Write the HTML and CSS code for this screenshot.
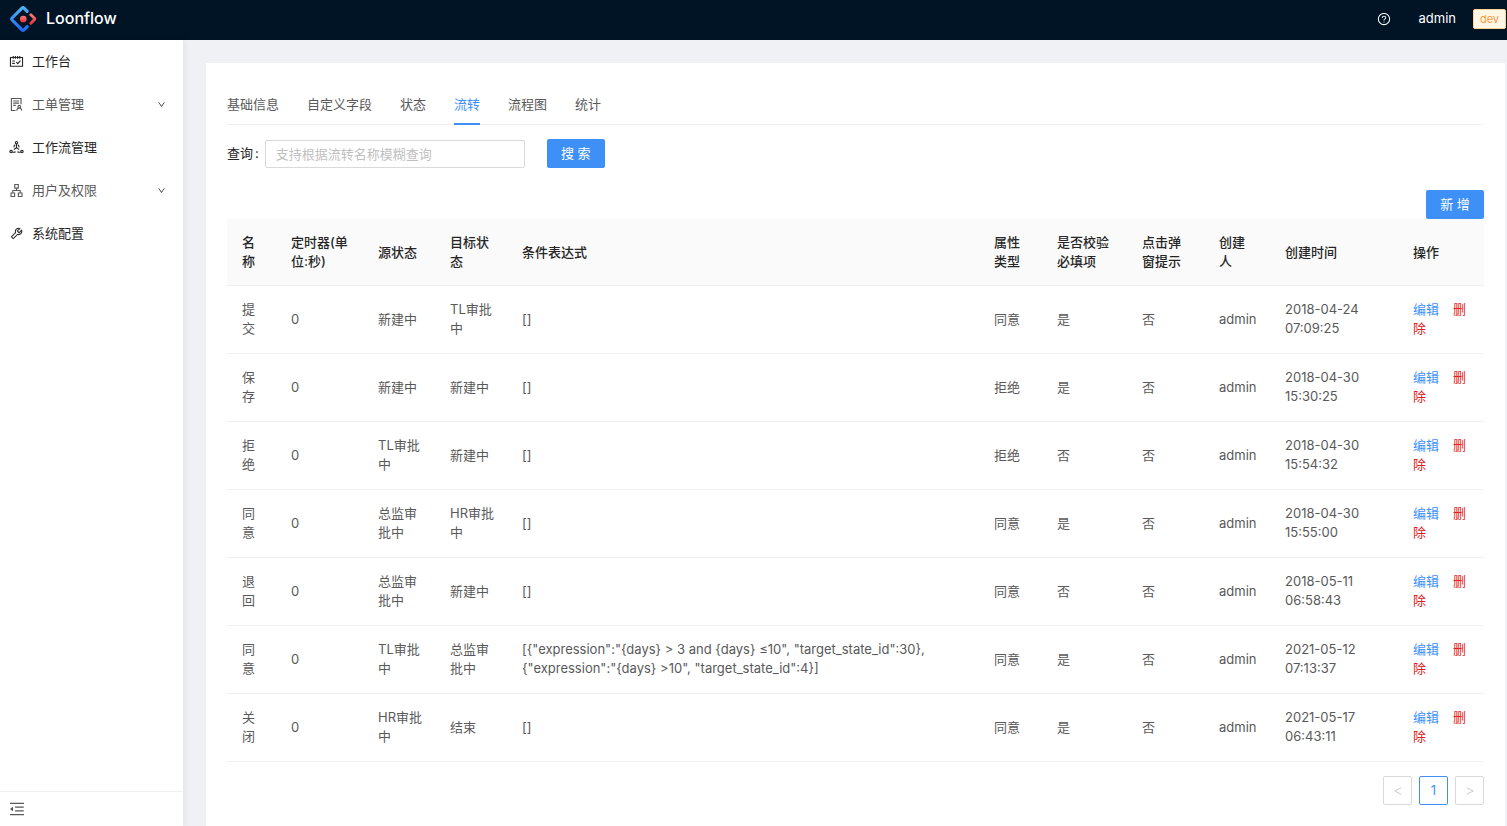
FILE: index.html
```
<!DOCTYPE html>
<html lang="zh-CN">
<head>
<meta charset="utf-8">
<meta name="viewport" content="width=device-width, initial-scale=1">
<title>Loonflow</title>
<link rel="stylesheet" href="styles.css">
</head>
<body>
<div class="app">
  <header class="topbar">
    <a class="brand" href="#">
      <svg class="logo" viewBox="0 0 200 200" aria-hidden="true">
        <defs>
          <linearGradient id="blue" x1="0" y1="0" x2="0" y2="1"><stop offset="0" stop-color="#4db5f5"/><stop offset="1" stop-color="#1f6df5"/></linearGradient>
          <linearGradient id="red" x1="0" y1="0" x2="0" y2="1"><stop offset="0" stop-color="#fa7a70"/><stop offset="1" stop-color="#ef3340"/></linearGradient>
        </defs>
        <path d="M130 45 L107 22 Q100 15 93 22 L22 93 Q15 100 22 107 L93 178 Q100 185 107 178 L130 155" fill="none" stroke="url(#blue)" stroke-width="22" stroke-linecap="round" stroke-linejoin="round"/>
        <path d="M156 70 L181 95 Q186 100 181 105 L156 130" fill="none" stroke="url(#red)" stroke-width="21" stroke-linecap="round" stroke-linejoin="round"/>
        <circle cx="102" cy="100" r="24" fill="url(#red)"/>
      </svg>
      <span>Loonflow</span>
    </a>
    <div class="tools">
      <button class="help" type="button" aria-label="帮助"><svg class="icon" viewBox="0 0 1024 1024"><path d="M512 64C264.600 64 64 264.600 64 512s200.600 448 448 448 448-200.600 448-448S759.400 64 512 64zm0 820c-205.400 0-372-166.600-372-372s166.600-372 372-372 372 166.600 372 372-166.600 372-372 372z"/><path d="M623.600 316.700C593.600 290.400 554 276 512 276s-81.600 14.500-111.600 40.700C369.200 344 352 380.700 352 420v7.600c0 4.400 3.600 8 8 8h48c4.400 0 8-3.600 8-8V420c0-44.100 43.100-80 96-80s96 35.900 96 80c0 31.100-22 59.600-56.100 72.700-21.200 8.100-39.200 22.300-52.100 40.900-13.100 19-19.900 41.800-19.900 64.900V620c0 4.400 3.600 8 8 8h48c4.400 0 8-3.600 8-8v-22.700a48.300 48.300 0 0130.900-44.800c59-22.700 97.100-74.700 97.100-132.500.1-39.300-17.100-76-48.300-103.300zM472 732a40 40 0 1080 0 40 40 0 10-80 0z"/></svg></button>
      <span class="user">admin</span>
      <span class="env">dev</span>
    </div>
  </header>
  <div class="body">
    <aside class="sidebar">
      <nav class="menu">
        <a class="item" href="#"><svg class="icon line" viewBox="0 0 1024 1024" aria-hidden="true"><path d="M100 240H924V840H100ZM290 140V330M438 140V330M586 140V330M734 140V330M220 480H400M220 640H400M500 550L600 655L780 450"/></svg><span>工作台</span></a>
        <a class="item sub" href="#"><svg class="icon line" viewBox="0 0 1024 1024" aria-hidden="true"><path d="M450 924H164V100H820V500M290 270H690M290 420H690M290 570H460"/><circle cx="700" cy="660" r="90"/><path d="M530 930C545 805 610 750 700 750S855 805 870 930"/></svg><span>工单管理</span><svg class="arrow" viewBox="0 0 1024 1024" aria-hidden="true"><path d="M884 256h-75c-5.100 0-9.900 2.500-12.900 6.600L512 654.200 227.900 262.600c-3-4.100-7.800-6.600-12.900-6.600h-75c-6.500 0-10.300 7.400-6.500 12.700l352.600 486.100c12.800 17.600 39 17.600 51.700 0l352.600-486.100c3.900-5.300.1-12.700-6.400-12.700z"/></svg></a>
        <a class="item" href="#"><svg class="icon line" viewBox="0 0 1024 1024" aria-hidden="true"><circle cx="512" cy="180" r="80"/><circle cx="140" cy="790" r="80"/><circle cx="884" cy="790" r="80"/><path d="M512 260V520L330 650M512 520L694 650M420 320C360 370 340 430 335 500M604 320C664 370 684 430 689 500M220 820C300 850 380 850 450 800M804 820C724 850 644 850 574 800"/></svg><span>工作流管理</span></a>
        <a class="item sub" href="#"><svg class="icon" viewBox="0 0 1024 1024" aria-hidden="true"><path d="M908 640H804V488c0-4.400-3.600-8-8-8H548v-96h108c8.800 0 16-7.200 16-16V80c0-8.800-7.200-16-16-16H368c-8.800 0-16 7.200-16 16v288c0 8.800 7.200 16 16 16h108v96H228c-4.400 0-8 3.600-8 8v152H116c-8.800 0-16 7.200-16 16v288c0 8.800 7.200 16 16 16h288c8.800 0 16-7.200 16-16V656c0-8.800-7.200-16-16-16H292v-88h440v88H620c-8.800 0-16 7.200-16 16v288c0 8.800 7.200 16 16 16h288c8.800 0 16-7.200 16-16V656c0-8.800-7.200-16-16-16zm-564 76v168H176V716h168zm84-408V140h168v168H428zm420 576H680V716h168v168z"/></svg><span>用户及权限</span><svg class="arrow" viewBox="0 0 1024 1024" aria-hidden="true"><path d="M884 256h-75c-5.100 0-9.900 2.500-12.900 6.600L512 654.200 227.900 262.600c-3-4.100-7.800-6.600-12.900-6.600h-75c-6.500 0-10.300 7.400-6.500 12.700l352.600 486.100c12.800 17.600 39 17.600 51.700 0l352.600-486.100c3.900-5.300.1-12.700-6.400-12.700z"/></svg></a>
        <a class="item" href="#"><svg class="icon" viewBox="0 0 1024 1024" aria-hidden="true"><path d="M876.600 239.500c-.5-.9-1.200-1.800-2-2.500-5-5-13.100-5-18.100 0L684.200 409.300l-67.900-67.900L788.700 169c.8-.8 1.400-1.600 2-2.500 3.600-6.100 1.600-13.900-4.500-17.500-98.200-58-226.800-44.700-311.300 39.700-67 67-89.200 162-66.500 247.400l-293 293c-3 3-2.800 7.900.3 11l169.700 169.700c3.100 3.100 8.100 3.300 11 .3l292.900-292.900c85.500 22.800 180.500.7 247.600-66.400 84.400-84.500 97.700-213.100 39.700-311.300zM786 499.800c-58.100 58.100-145.300 69.300-214.600 33.600l-8.800 8.800-.1-.1-274 274.100-79.200-79.200 230.100-230.100s0 .1.1.1l52.800-52.800c-35.700-69.300-24.500-156.500 33.600-214.600a184.200 184.200 0 01144-53.500L537 318.900a32.050 32.050 0 000 45.300l124.500 124.500a32.050 32.050 0 0045.300 0l132.800-132.800c3.700 51.800-14.400 104.800-53.600 143.900z"/></svg><span>系统配置</span></a>
      </nav>
      <div class="fold">
        <button type="button" aria-label="收起菜单"><svg class="icon" viewBox="0 0 1024 1024"><path d="M408 442h480c4.400 0 8-3.600 8-8v-56c0-4.400-3.600-8-8-8H408c-4.400 0-8 3.600-8 8v56c0 4.400 3.600 8 8 8zm-8 204c0 4.400 3.600 8 8 8h480c4.400 0 8-3.600 8-8v-56c0-4.400-3.600-8-8-8H408c-4.400 0-8 3.600-8 8v56zm504-486H120c-4.400 0-8 3.600-8 8v56c0 4.400 3.600 8 8 8h784c4.400 0 8-3.600 8-8v-56c0-4.400-3.600-8-8-8zm0 632H120c-4.400 0-8 3.600-8 8v56c0 4.400 3.600 8 8 8h784c4.400 0 8-3.600 8-8v-56c0-4.400-3.600-8-8-8zM115.400 518.900L271.700 642c5.800 4.600 14.400.5 14.400-6.900V388.900c0-7.400-8.500-11.500-14.400-6.900L115.400 505.100a8.740 8.740 0 000 13.800z"/></svg></button>
      </div>
    </aside>
    <main class="main">
      <section class="panel">
        <div class="tabs" role="tablist">
          <button class="tab" type="button" role="tab">基础信息</button>
          <button class="tab" type="button" role="tab">自定义字段</button>
          <button class="tab" type="button" role="tab">状态</button>
          <button class="tab active" type="button" role="tab" aria-selected="true">流转</button>
          <button class="tab" type="button" role="tab">流程图</button>
          <button class="tab" type="button" role="tab">统计</button>
        </div>
        <form class="search">
          <label for="query">查询<span class="colon">:</span></label>
          <input id="query" type="text" placeholder="支持根据流转名称模糊查询">
          <button class="primary" type="button">搜 索</button>
        </form>
        <div class="actions"><button class="primary" type="button">新 增</button></div>
        <table class="grid">
          <colgroup><col class="c-name"><col class="c-timer"><col class="c-state"><col class="c-state"><col><col class="c-attr"><col class="c-check"><col class="c-popup"><col class="c-user"><col class="c-time"><col class="c-ops"></colgroup>
          <thead><tr><th>名称</th><th>定时器(单位:秒)</th><th>源状态</th><th>目标状态</th><th>条件表达式</th><th>属性类型</th><th>是否校验必填项</th><th>点击弹窗提示</th><th>创建人</th><th>创建时间</th><th>操作</th></tr></thead>
          <tbody>
            <tr><td>提交</td><td>0</td><td>新建中</td><td>TL审批中</td><td>[]</td><td>同意</td><td>是</td><td>否</td><td>admin</td><td>2018-04-24 07:09:25</td><td><a class="edit" href="#">编辑</a><a class="del" href="#">删除</a></td></tr>
            <tr><td>保存</td><td>0</td><td>新建中</td><td>新建中</td><td>[]</td><td>拒绝</td><td>是</td><td>否</td><td>admin</td><td>2018-04-30 15:30:25</td><td><a class="edit" href="#">编辑</a><a class="del" href="#">删除</a></td></tr>
            <tr><td>拒绝</td><td>0</td><td>TL审批中</td><td>新建中</td><td>[]</td><td>拒绝</td><td>否</td><td>否</td><td>admin</td><td>2018-04-30 15:54:32</td><td><a class="edit" href="#">编辑</a><a class="del" href="#">删除</a></td></tr>
            <tr><td>同意</td><td>0</td><td>总监审批中</td><td>HR审批中</td><td>[]</td><td>同意</td><td>是</td><td>否</td><td>admin</td><td>2018-04-30 15:55:00</td><td><a class="edit" href="#">编辑</a><a class="del" href="#">删除</a></td></tr>
            <tr><td>退回</td><td>0</td><td>总监审批中</td><td>新建中</td><td>[]</td><td>同意</td><td>否</td><td>否</td><td>admin</td><td>2018-05-11 06:58:43</td><td><a class="edit" href="#">编辑</a><a class="del" href="#">删除</a></td></tr>
            <tr><td>同意</td><td>0</td><td>TL审批中</td><td>总监审批中</td><td>[{"expression":"{days} &gt; 3 and {days} ≤10", "target_state_id":30},<br>{"expression":"{days} &gt;10", "target_state_id":4}]</td><td>同意</td><td>是</td><td>否</td><td>admin</td><td>2021-05-12 07:13:37</td><td><a class="edit" href="#">编辑</a><a class="del" href="#">删除</a></td></tr>
            <tr><td>关闭</td><td>0</td><td>HR审批中</td><td>结束</td><td>[]</td><td>同意</td><td>是</td><td>否</td><td>admin</td><td>2021-05-17 06:43:11</td><td><a class="edit" href="#">编辑</a><a class="del" href="#">删除</a></td></tr>
          </tbody>
        </table>
        <nav class="pager" aria-label="分页">
          <button type="button" aria-label="上一页" disabled><svg viewBox="0 0 10 10"><path d="M9 1L1 5L9 9"/></svg></button>
          <button class="current" type="button">1</button>
          <button type="button" aria-label="下一页" disabled><svg viewBox="0 0 10 10"><path d="M1 1L9 5L1 9"/></svg></button>
        </nav>
      </section>
    </main>
  </div>
</div>
</body>
</html>
```
FILE: styles.css
```
* { box-sizing: border-box; }
body {
  margin: 0;
  font-family: Inter, "Noto Sans CJK SC", sans-serif;
  font-size: 13px;
  line-height: 19px;
  color: #595959;
  background: #f0f2f5;
}
button, input { font: inherit; }
button { padding: 0; border: 0; background: none; color: inherit; cursor: pointer; }
a { color: inherit; text-decoration: none; }
svg { display: block; }
.app { display: flex; flex-direction: column; min-height: 100vh; }

.topbar {
  display: flex;
  align-items: center;
  justify-content: space-between;
  height: 40px;
  padding: 0 1px 3px 9px;
  background: #011426;
  color: #fff;
}
.brand { display: flex; align-items: center; gap: 9px; font-size: 16px; font-weight: 500; }
.logo { width: 28px; height: 28px; }
.tools { display: flex; align-items: center; }
.help { margin-right: 28px; }
.user { margin-right: 17px; }
.env {
  width: 33px;
  height: 20px;
  border: 1px solid #ffd591;
  border-radius: 2px;
  background: #fff7e6;
  color: #fa9a3c;
  font-size: 11px;
  line-height: 18px;
  text-align: center;
}
.icon { width: 14px; height: 14px; flex: none; fill: currentColor; }
.line { fill: none; stroke: currentColor; stroke-width: 76; }

.body { display: flex; flex: 1; }
.sidebar {
  display: flex;
  flex-direction: column;
  flex: none;
  width: 183px;
  background: #fff;
  box-shadow: 2px 0 7px rgba(29, 35, 41, .06);
  z-index: 1;
}
.menu { display: flex; flex-direction: column; flex: 1; gap: 7px; padding-top: 3px; }
.item { display: flex; align-items: center; gap: 8px; height: 36px; padding: 0 17px 0 9px; color: #262626; }
.item .icon { width: 15px; height: 15px; }
.sub { color: #595959; }
.arrow { width: 9px; height: 9px; margin-left: auto; fill: #333; }
.fold { height: 35px; padding: 8px; border-top: 1px solid #f0f0f0; }
.fold .icon { width: 18px; height: 18px; }

.main { display: flex; flex: 1; min-width: 0; padding: 23px 2px 0 23px; background: #eff1f5; }
.panel { flex: 1; min-width: 0; padding: 22px 21px 20px; background: #fff; }
.tabs { display: flex; gap: 28px; border-bottom: 1px solid #f0f0f0; }
.tab { height: 40px; margin-bottom: -1px; border-bottom: 2px solid transparent; }
.active { border-color: #3e90f7; color: #3e90f7; }

.search { display: flex; align-items: center; margin-top: 14px; }
.search label { color: #262626; }
.colon { margin: 0 6px 0 2px; }
.search input {
  width: 260px;
  height: 28px;
  margin-right: 22px;
  padding: 0 10px;
  border: 1px solid #d9d9d9;
  border-radius: 2px;
}
.search input::placeholder { color: #bfbfbf; }
.primary { width: 58px; height: 29px; border-radius: 2px; background: #3e90f7; color: #fff; }
.actions { display: flex; justify-content: flex-end; margin-top: 22px; }

.grid { width: 100%; table-layout: fixed; border-collapse: separate; border-spacing: 0; }
.c-name { width: 49px; }
.c-timer { width: 87px; }
.c-state { width: 72px; }
.c-attr { width: 63px; }
.c-check { width: 85px; }
.c-popup { width: 77px; }
.c-user { width: 66px; }
.c-time { width: 128px; }
.c-ops { width: 86px; }
th, td { border-bottom: 1px solid #f0f0f0; text-align: left; vertical-align: middle; }
th { padding: 14px 13px 14px 15px; background: #fafafa; color: #262626; font-weight: 500; }
td { padding: 14px 11px 15px 15px; }
.edit { margin-right: 14px; color: #3e90f7; }
.del { color: #e02020; }

.pager { display: flex; justify-content: flex-end; gap: 7px; margin-top: 14px; }
.pager button {
  display: flex;
  align-items: center;
  justify-content: center;
  width: 29px;
  height: 29px;
  border: 1px solid #d9d9d9;
  border-radius: 2px;
}
.pager svg { width: 8px; height: 10px; fill: none; stroke: #bfbfbf; }
.pager .current { border-color: #3e90f7; color: #3e90f7; }
```
